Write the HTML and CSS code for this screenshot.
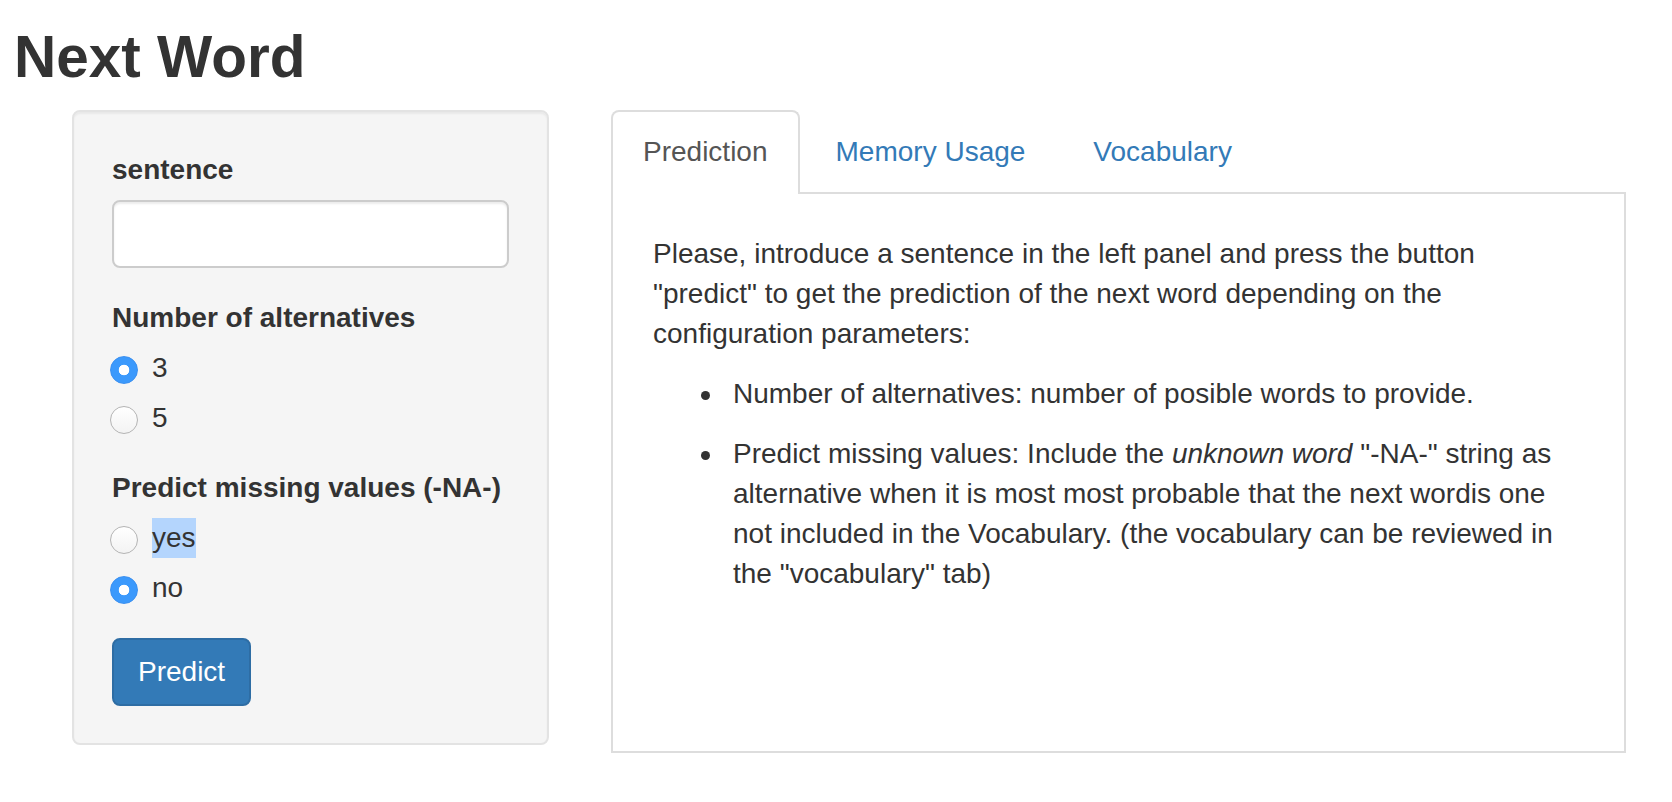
FILE: index.html
```html
<!DOCTYPE html>
<html lang="en">
<head>
<meta charset="utf-8">
<title>Next Word</title>
<link rel="stylesheet" href="styles.css">
</head>
<body>
<div class="page">
  <h2 class="title">Next Word</h2>
  <div class="layout">
    <aside class="sidebar">
      <form class="well">
        <div class="form-group">
          <label class="control-label" for="sentence">sentence</label>
          <input class="text-input" id="sentence" type="text">
        </div>
        <div class="form-group">
          <label class="control-label">Number of alternatives</label>
          <div class="options">
            <label class="radio"><input class="radio-input" type="radio" name="alt" checked><span>3</span></label>
            <label class="radio"><input class="radio-input" type="radio" name="alt"><span>5</span></label>
          </div>
        </div>
        <div class="form-group">
          <label class="control-label">Predict missing values (-NA-)</label>
          <div class="options">
            <label class="radio"><input class="radio-input" type="radio" name="na"><span class="selected-text">yes</span></label>
            <label class="radio"><input class="radio-input" type="radio" name="na" checked><span>no</span></label>
          </div>
        </div>
        <button class="btn" type="button">Predict</button>
      </form>
    </aside>
    <main class="main">
      <ul class="tabs">
        <li class="tab active"><a href="#">Prediction</a></li>
        <li class="tab"><a href="#">Memory Usage</a></li>
        <li class="tab"><a href="#">Vocabulary</a></li>
      </ul>
      <div class="tab-content">
        <p class="intro">Please, introduce a sentence in the left panel and press the button "predict" to get the prediction of the next word depending on the configuration parameters:</p>
        <ul class="bullets">
          <li>Number of alternatives: number of posible words to provide.</li>
          <li>Predict missing values: Include the <em>unknown word</em> "-NA-" string as alternative when it is most most probable that the next wordis one not included in the Vocabulary. (the vocabulary can be reviewed in the "vocabulary" tab)</li>
        </ul>
      </div>
    </main>
  </div>
</div>
</body>
</html>
```
FILE: styles.css
```css
* {
  box-sizing: border-box;
}

html, body {
  margin: 0;
  background: #fff;
}

body {
  font-family: "Liberation Sans", Arial, Helvetica, sans-serif;
  font-size: 28px;
  line-height: 40px;
  color: #333;
}

.page {
  padding-left: 14px;
}

.title {
  margin: 24px 0 20px;
  font-size: 58.5px;
  line-height: 66px;
  font-weight: 700;
  color: #333;
}

.layout {
  display: flex;
  align-items: flex-start;
  gap: 62px;
  padding-left: 58px;
}

.sidebar {
  width: 477px;
  flex: none;
}

.well {
  margin: 0;
  padding: 38px 38px 37px;
  background: #f5f5f5;
  border: 2px solid #e3e3e3;
  border-radius: 8px;
  box-shadow: inset 0 2px 2px rgba(0, 0, 0, 0.05);
}

.form-group {
  margin-bottom: 30px;
}

.control-label {
  display: block;
  font-weight: 700;
  margin-bottom: 10px;
}

.text-input {
  display: block;
  width: 100%;
  height: 68px;
  margin: 0;
  padding: 12px 24px;
  font: inherit;
  color: #555;
  background: #fff;
  border: 2px solid #ccc;
  border-radius: 8px;
  box-shadow: inset 0 2px 2px rgba(0, 0, 0, 0.075);
}

.options {
  display: flex;
  flex-direction: column;
  gap: 10px;
}

.radio {
  display: flex;
  align-items: flex-start;
  height: 40px;
  font-weight: 400;
}

.radio-input {
  appearance: none;
  -webkit-appearance: none;
  flex: none;
  width: 28px;
  height: 28px;
  margin: 8px 14px 0 -2px;
  border-radius: 50%;
  border: 1.5px solid #b4b4b4;
  background: linear-gradient(#ffffff, #f3f3f3);
}

.radio-input:checked {
  border-color: #3a8ff0;
  background: radial-gradient(circle, #ffffff 0 5px, #3b99fc 5.6px);
}

.selected-text {
  background: #b4d5fd;
}

.btn {
  display: inline-block;
  margin: 0;
  height: 68px;
  padding: 12px 24px;
  font: inherit;
  line-height: 40px;
  color: #fff;
  background: #337ab7;
  border: 2px solid #2e6da4;
  border-radius: 8px;
  cursor: pointer;
}

.main {
  width: 1015px;
  flex: none;
}

.tabs {
  display: flex;
  margin: 0;
  padding: 0;
  list-style: none;
  border-bottom: 2px solid #ddd;
}

.tab {
  margin: 0 4px -2px 0;
}

.tab a {
  display: block;
  padding: 20px 30px 22px;
  line-height: 40px;
  color: #337ab7;
  text-decoration: none;
  border: 2px solid transparent;
  border-bottom: 0;
  border-radius: 8px 8px 0 0;
}

.tab.active a {
  color: #555;
  background: #fff;
  border-color: #ddd;
}

.tab-content {
  min-height: 559px;
  padding: 40px;
  border: 2px solid #ddd;
  border-top: 0;
}

.intro {
  margin: 0 0 20px;
}

.bullets {
  margin: 0 0 20px;
  padding-left: 80px;
  list-style: none;
}

.bullets li {
  position: relative;
  margin-bottom: 20px;
}

.bullets li::before {
  content: "";
  position: absolute;
  left: -32px;
  top: 17px;
  width: 9px;
  height: 9px;
  border-radius: 50%;
  background: #333;
}
```
